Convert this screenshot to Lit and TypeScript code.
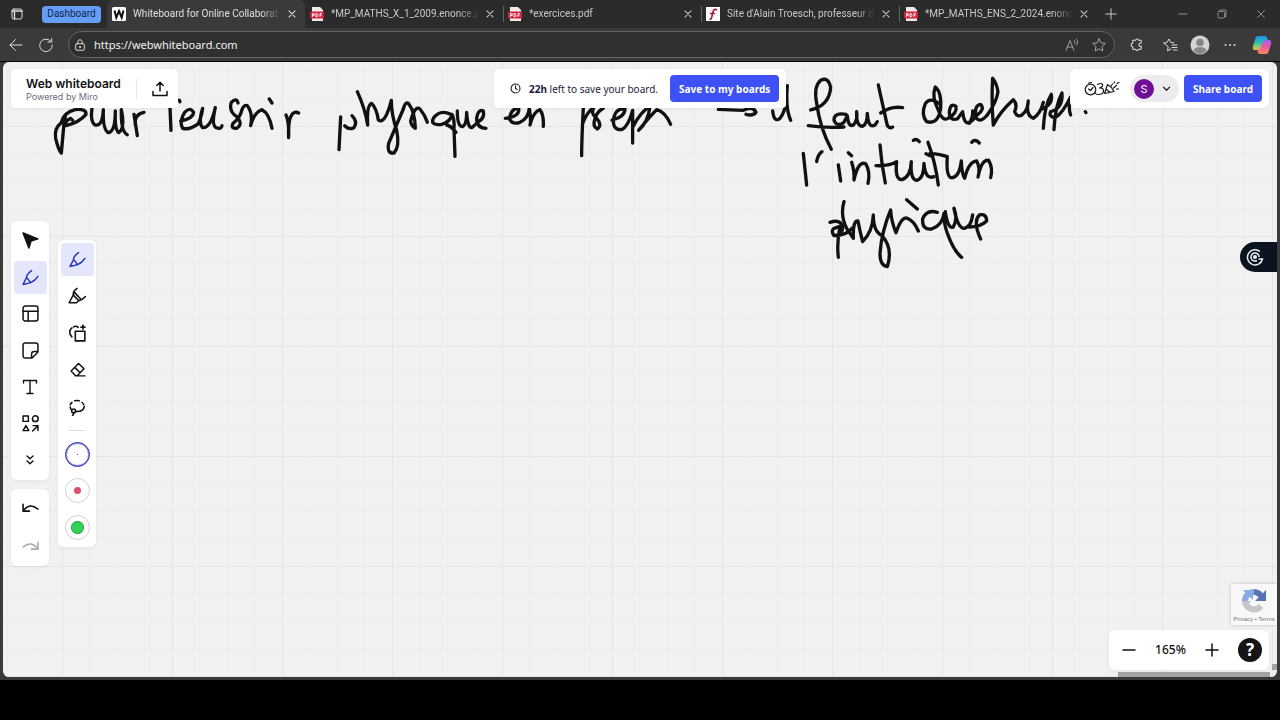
import { LitElement, html, svg, css } from "lit";
import { customElement, property, state } from "lit/decorators.js";
import { classMap } from "lit/directives/class-map.js";

const icons: Record<string, unknown> = {
  workspace: svg`<rect x="3" y="3" width="10" height="10" rx="2"/><path d="M3 5h10M5.500 6v7" stroke-width="1.4"/>`,
  back: svg`<path d="M14 8H2M7.500 2.500L2 8l5.500 5.500"/>`,
  reload: svg`<path d="M13 4.500A6.300 6.300 0 1 0 14.300 8M13.700 1.500v3.500h-3.700"/>`,
  lock: svg`<rect x="3" y="6.500" width="10" height="7.500" rx="1.500"/><path d="M5.500 6.500V4.500a2.500 2.500 0 0 1 5 0v2"/><circle cx="8" cy="10.300" r=".7" fill="currentColor"/>`,
  close: svg`<path d="M4.500 4.500l7 7M11.500 4.500l-7 7"/>`,
  plus: svg`<path d="M8 2v12M2 8h12"/>`,
  minus: svg`<path d="M2 8h12"/>`,
  minimize: svg`<path d="M4 8h8"/>`,
  restore: svg`<rect x="4" y="5.500" width="6.500" height="6.500" rx="1"/><path d="M6 5.500V4h6v6.500h-1.500"/>`,
  star: svg`<path d="M8 1.800l1.900 4 4.300.6-3.100 3.100.7 4.400L8 11.800l-3.800 2.100.7-4.400L1.800 6.400l4.300-.6z"/>`,
  aloud: svg`<path d="M2 13.500L6 3.500l4 10M3.300 10h5.400M10.500 3.500q1.500 1.500 0 3.500M12.500 2q2.800 2.700.3 6"/>`,
  puzzle: svg`<path d="M5 3.500h2a1.700 1.700 0 0 1 3.300 0H13v3a1.800 1.800 0 1 0 0 3.400V13h-2.800a1.700 1.700 0 0 1-3.300 0H4v-2.800a1.800 1.800 0 1 1 0-3.600V3.500z"/>`,
  favorites: svg`<path d="M9 12l-3.500 1.800.7-4L3 7l-1.500-1L5 5.500 7 2l1.800 3.500 3 .3M10 8h5M10 10.500h5M11.500 13H15"/>`,
  more: svg`<g fill="currentColor" stroke="none"><circle cx="3.500" cy="8" r="1"/><circle cx="8" cy="8" r="1"/><circle cx="12.500" cy="8" r="1"/></g>`,
  export: svg`<path d="M8 10V1.500M4.800 4.500L8 1.300l3.200 3.200M1 10.500v4h14v-4"/>`,
  clock: svg`<circle cx="8" cy="8" r="6.500"/><path d="M8 4v4l2.500 1.500"/>`,
  chevron: svg`<path d="M3.500 6L8 10.500 12.500 6"/>`,
  cursor: svg`<path d="M1 1l14 5.500-6.500 2L6.500 15z" fill="currentColor"/>`,
  pen: svg`<path d="M9 1.500Q4 5 4.300 8L1 14.500 8.200 12.800Q12.500 11 15 7M4.300 8L8.200 12.800"/>`,
  highlighter: svg`<path d="M8 1.200Q4 4 5 6.500L1 14h6.500l2-1.800Q13 11.500 15.500 8.500M4.500 7l5.200 5.200M6 5l5.500 6"/>`,
  smart: svg`<rect x="6.500" y="6.500" width="8.500" height="8.500"/><path d="M3.500 11.500Q-.5 7 3.500 3.500M5 2.500q2.500-1.300 4 .5M11.500 2.800h3.600M13.300 1v3.600"/>`,
  eraser: svg`<path d="M2 9.500L9 2.300l5.200 5-6.500 6.500H6.200L2 9.500zM5.500 6l5 5M6 14h9"/>`,
  lasso: svg`<path d="M2 6q.5-1.300 1.500-2M6 2.500q2-.7 4 0M12.500 4q1 .8 1.500 2M14.500 7.500Q14 12.500 6.500 12M2 8q0 1.500 1.200 2.500"/><circle cx="5" cy="11.500" r="1.700"/><path d="M5 13.500q0 1.500-1 2"/>`,
  table: svg`<rect x="1" y="1" width="14" height="14" rx="2"/><path d="M1 5.800h14M5.800 5.800V15"/>`,
  sticky: svg`<path d="M3 1h10q2 0 2 2v6.500L9.500 15H3q-2 0-2-2V3q0-2 2-2zM15 9h-3.500Q9 9 9 11.500V15"/>`,
  text: svg`<path d="M1.500 4V1.500h13V4M8 1.500v13M5 14.500h6"/>`,
  shapes: svg`<rect x="1" y="1" width="5" height="5"/><circle cx="12.500" cy="3.500" r="2.700"/><path d="M3.700 10L1 14.700h5.400zM10 15l5-5M10.500 10H15v4.500"/>`,
  expand: svg`<path d="M5 4L8 6.800 11 4M5 9L8 11.800 11 9"/>`,
  undo: svg`<path d="M1 4v6.500h6M1.500 10Q7 2 15 8.500"/>`,
  redo: svg`<path d="M15 4v6.500H9M14.500 10Q9 2 1 8.500"/>`,
};

const icon = (name: string, size = 16, weight = 1.3) => html`<svg
  width=${size} height=${size} viewBox="0 0 16 16" fill="none" stroke="currentColor"
  stroke-width=${weight} stroke-linecap="round" stroke-linejoin="round" aria-hidden="true">${icons[name]}</svg>`;

const favicons: Record<string, unknown> = {
  board: svg`<rect x="1" y="1" width="14" height="14" rx="1.500" fill="#fff"/><path d="M3.500 4.500l1.800 7L8 5l2.700 6.500 1.800-7" fill="none" stroke="#111" stroke-width="2"/>`,
  pdf: svg`<path d="M3 1h8l3 3v11H3z" fill="#f4e9ea"/><rect x="1" y="5.500" width="14" height="7" rx="1" fill="#d5213b"/><path d="M3.500 11V7.500h1.700v2H3.500M7 11V7.500q2 0 2 1.700T7 11M11 11V7.500h2M11 9.300h1.600" fill="none" stroke="#fff" stroke-width=".9"/>`,
  site: svg`<rect x="1" y="1" width="14" height="14" fill="#fff"/><path d="M12 4q-3-2-4 2l-1.500 6Q6 13.500 4.500 13M5 7.500h5" fill="none" stroke="#a8152c" stroke-width="1.600"/>`,
};

const base = css`
  * { box-sizing: border-box; }
  button { font: inherit; color: inherit; border: 0; padding: 0; background: none; display: flex; align-items: center; justify-content: center; }
  svg { display: block; flex: none; }
`;

@customElement("browser-tab")
class BrowserTab extends LitElement {
  @property() label = "";
  @property() kind = "pdf";
  @property({ type: Boolean, reflect: true }) active = false;
  static styles = [base, css`
    :host { flex: 0 1 198px; min-width: 0; display: flex; align-items: center; padding-right: 6px; color: #c8c8c8; }
    :host([active]) { background: #3a3a3a; border-radius: 6px 6px 0 0; color: #e0e0e0; }
    .tab { flex: 1; min-width: 0; justify-content: flex-start; gap: 6px; height: 16px; border-left: 1px solid #626262; padding-left: 3px; }
    :host([active]) .tab { border-color: transparent; }
    :host([first]) .tab { border-color: transparent; }
    .label { flex: 1; min-width: 0; overflow: hidden; white-space: nowrap; text-align: left; mask-image: linear-gradient(to right, #000 calc(100% - 20px), transparent); }
    .close { width: 14px; height: 16px; margin-left: 4px; }
  `];
  render() {
    return html`
      <button class="tab"><svg width="16" height="16" viewBox="0 0 16 16" aria-hidden="true">${favicons[this.kind]}</svg><span class="label">${this.label}</span></button>
      <button class="close" aria-label="Close tab">${icon("close", 14, 1.2)}</button>`;
  }
}

@customElement("browser-chrome")
class BrowserChrome extends LitElement {
  static styles = [base, css`
    :host { display: block; font: 10px/16px Roboto, "Open Sans", sans-serif; color: #dcdcdc; }
    .tabs { display: flex; height: 28px; background: #2b2b2b; padding-left: 9px; }
    .workspace { width: 16px; }
    .group { align-self: center; width: 59px; height: 17px; margin: 0 6px 0 17px; border-radius: 4px; background: #669df6; color: #12264d; }
    .new { width: 28px; }
    .window { display: flex; margin-left: auto; color: #8b8b8b; }
    .window button { width: 39px; }
    .bar { display: flex; align-items: center; height: 34px; padding: 0 10px 0 8px; background: #3a3a3a; border-bottom: 1px solid #050505; }
    .nav { width: 16px; margin-right: 14px; }
    .address { flex: 1; min-width: 0; display: flex; align-items: center; gap: 7px; height: 27px; padding: 0 6px 0 4px; border: 1px solid #646464; border-radius: 14px; background: #303030; }
    .address input { flex: 1; min-width: 0; border: 0; padding: 0; background: none; color: #f0f0f0; font: 11px/16px "Noto Sans", "Open Sans", sans-serif; }
    .address button { width: 18px; margin-left: 2px; color: #a8a8a8; }
    .tools { display: flex; align-items: center; gap: 14px; margin-left: 13px; }
    .tools button { width: 16px; }
    .tools .puzzle { margin-right: 4px; }
    .tools .copilot { margin-left: 2px; }
  `];
  render() {
    return html`
      <div class="tabs">
        <button class="workspace" aria-label="Workspaces">${icon("workspace", 16, 1)}</button>
        <button class="group">Dashboard</button>
        <browser-tab active kind="board" label="Whiteboard for Online Collaborat"></browser-tab>
        <browser-tab first label="*MP_MATHS_X_1_2009.enonce.pdf"></browser-tab>
        <browser-tab label="*exercices.pdf"></browser-tab>
        <browser-tab kind="site" label="Site d'Alain Troesch, professeur de"></browser-tab>
        <browser-tab label="*MP_MATHS_ENS_2_2024.enonce"></browser-tab>
        <button class="new" aria-label="New tab">${icon("plus", 14, 1)}</button>
        <div class="window">
          <button aria-label="Minimize">${icon("minimize", 16, 1)}</button>
          <button aria-label="Restore">${icon("restore", 16, 1)}</button>
          <button aria-label="Close">${icon("close", 16, 1)}</button>
        </div>
      </div>
      <div class="bar">
        <button class="nav" aria-label="Back">${icon("back", 16, 1)}</button>
        <button class="nav" aria-label="Reload">${icon("reload", 16, 1)}</button>
        <div class="address">
          ${icon("lock", 14, 1.1)}
          <input aria-label="Address" .value=${"https://webwhiteboard.com"}>
          <button aria-label="Read aloud">${icon("aloud", 16, 0.9)}</button>
          <button aria-label="Favorite">${icon("star", 16, 1)}</button>
        </div>
        <div class="tools">
          <button class="puzzle" aria-label="Extensions">${icon("puzzle", 15, 1.1)}</button>
          <button aria-label="Favorites list">${icon("favorites", 16, 1)}</button>
          <button aria-label="Profile"><svg width="20" height="20" viewBox="0 0 20 20"><circle cx="10" cy="10" r="9.500" fill="#d4d4d4"/><circle cx="10" cy="7.500" r="3.800" fill="#858585"/><path d="M3.500 16q1-4 6.500-4t6.500 4q-6.500 6-13 0z" fill="#858585"/></svg></button>
          <button aria-label="More">${icon("more")}</button>
          <button class="copilot" aria-label="Copilot"><svg width="20" height="20" viewBox="0 0 20 20">
            <defs><linearGradient id="a" x2="0" y2="1"><stop stop-color="#1a8df0"/><stop offset=".5" stop-color="#33c3a0"/><stop offset="1" stop-color="#f2c53d"/></linearGradient>
            <linearGradient id="b" x2="0" y2="1"><stop stop-color="#a15cf0"/><stop offset=".5" stop-color="#ee5aa0"/><stop offset="1" stop-color="#fb8a55"/></linearGradient></defs>
            <path d="M6 1h7q2 0 2.500 3l.5 2h-4L9 13q-.7 2-2.500 2H3q-3 0-2-4l2.500-8Q4 1 6 1z" fill="url(#a)"/>
            <path d="M14 19H8q-2 0-2.500-3L5 14h3l3-7q.7-2 2.500-2H17q3 0 2 4l-2.500 8Q16 19 14 19z" fill="url(#b)"/></svg></button>
        </div>
      </div>`;
  }
}

/* Handwritten strokes, one list per phrase, in thirds of a board pixel. */
const ink = [
  { x: 40, y: 75, d: [
    "M62 145Q42 160 47 190Q55 225 64 234Q68 190 72 145L76 125M64 142Q72 112 105 104Q140 100 138 118Q118 142 78 152Q72 140 92 130L98 136",
    "M156 100Q150 140 165 150Q188 155 190 104Q188 165 205 173Q226 170 226 108Q224 165 236 173Q256 160 244 104Q242 170 262 179",
    "M282 118L292 182M286 150Q282 118 312 112",
    "M390 98L393 166M418 76L420 80",
    "M422 138Q460 130 461 112Q450 94 434 112Q416 140 428 160Q450 166 475 146Q486 120 488 100Q474 145 488 158Q512 160 526 98Q514 150 528 158Q545 164 546 152",
    "M594 84Q590 66 574 82Q565 110 592 126Q610 148 590 160Q570 160 580 144Q600 130 606 104Q612 88 622 92Q640 115 632 152Q642 112 666 104Q688 115 696 160M688 72L696 84",
    "M738 120Q748 140 746 188Q744 145 752 125Q762 106 776 114",
  ] },
  { x: 320, y: 75, d: [
    "M62 126L57 224M96 122Q114 140 102 158Q86 166 74 152",
    "M112 50Q135 100 143 150Q140 90 155 85Q170 100 175 135Q195 150 214 76Q214 120 230 165Q240 215 222 234Q200 237 206 205Q225 160 250 102",
    "M250 102Q256 78 266 86Q285 110 286 160Q272 150 272 138Q285 90 300 102Q315 120 322 142",
    "M392 118Q360 102 340 130Q330 152 365 148Q392 140 396 118Q404 130 402 160L405 244M380 150Q392 152 408 172",
    "M412 108Q412 155 428 155Q440 150 440 112Q443 160 456 158L475 140Q495 130 490 108Q475 100 470 130Q470 160 498 160",
    "M556 130Q600 125 596 100Q575 98 568 130Q575 150 600 142Q625 130 628 100Q634 140 630 150Q640 110 660 104Q672 120 670 154",
    "M790 98Q785 200 785 242M787 148Q800 112 822 96Q810 115 830 130Q848 150 832 162Q816 155 826 128Q832 110 850 100",
    "M876 135Q915 125 915 102Q890 98 882 125Q874 165 905 164Q925 155 938 106L938 204M940 154Q960 112 990 94Q985 140 956 166Q985 130 1010 104Q1035 110 1052 148",
  ] },
  { x: 700, y: 65, d: [
    "M55 133L130 136Q160 122 168 142Q158 154 138 148M218 138Q222 174 240 160Q254 142 256 118M262 62Q256 130 272 166",
    "M332 135Q388 122 392 68Q385 34 362 46Q340 65 350 115Q360 190 394 253M325 182Q380 190 432 186",
    "M438 148Q402 142 402 165Q410 188 432 172L442 152Q445 188 460 180Q474 165 470 140Q468 184 488 184Q502 178 502 145Q505 192 525 180L532 170",
    "M535 60L562 182Q570 192 578 186M542 144Q575 122 608 128",
    "M718 116Q690 95 676 116Q662 150 680 170Q715 180 722 130Q725 80 706 66Q694 95 716 138Q728 170 744 160Q772 145 768 124Q752 112 748 140Q748 168 772 162L788 140Q792 178 808 174Q820 155 818 138",
    "M808 174Q820 165 832 150Q856 132 842 118Q822 120 828 158Q840 176 862 150",
    "M862 150Q890 110 894 80Q890 55 878 40Q874 110 880 180Q900 140 940 104Q954 118 944 140Q952 160 968 148Q984 134 985 108Q976 150 1000 160Q1022 145 1030 112",
    "M1030 190Q1034 120 1054 88Q1060 118 1026 132M1062 194Q1066 120 1086 84Q1090 130 1052 140Q1045 155 1066 158Q1088 145 1112 96Q1104 130 1112 150M1156 140L1158 143",
    "M310 265L320 360M350 290Q354 268 366 260M415 300L422 348M445 263L455 272",
    "M455 292Q464 320 462 345Q475 286 497 296Q512 320 504 355M540 240Q545 300 556 354M528 302Q568 304 590 290Q584 345 606 344Q632 335 634 290Q630 346 652 346Q672 338 672 295Q676 346 702 335",
    "M640 226Q650 220 658 230M684 232Q706 290 715 360M678 266L690 272M690 265Q722 268 742 275Q738 330 752 338Q778 340 784 288Q786 330 794 340Q806 290 830 288Q842 310 834 336Q845 282 866 286Q880 310 872 338M815 232Q825 220 838 234",
    "M390 472Q420 462 428 484Q430 510 402 512Q392 498 402 490L420 484Q410 530 415 577M402 512Q440 512 456 490",
    "M432 410Q420 450 440 490L460 520Q458 466 474 468Q480 500 488 530Q518 500 520 450Q520 500 546 512Q580 550 562 605Q540 602 540 565Q545 500 572 435Q574 470 588 503Q606 452 622 460Q642 468 655 498M620 404L652 432",
    "M712 442Q680 432 668 462Q666 496 695 492Q728 480 732 445Q730 470 742 505Q762 560 785 577M736 440Q744 494 760 486Q774 460 762 430Q774 492 794 490Q814 484 818 450M806 486Q842 486 860 468Q860 445 838 450Q818 470 842 522",
  ] },
];

@customElement("board-canvas")
class BoardCanvas extends LitElement {
  static styles = css`
    :host { display: block; background: #f1f1f1; }
    svg { display: block; width: 100%; height: 100%; }
    .ink { fill: none; stroke: #111; stroke-width: 10; stroke-linecap: round; stroke-linejoin: round; }
  `;
  render() {
    return html`<svg role="img" aria-label="Handwritten notes">
      <defs><pattern id="grid" x="59" y="64" width="110" height="110" patternUnits="userSpaceOnUse">
        <path d="M27.500 0v110M55.500 0v110M82.500 0v110M0 27.500h110M0 55.500h110M0 82.500h110" stroke="#eeeeee"/>
        <path d="M.5 0v110M0 .5h110" stroke="#e5e5e5"/>
      </pattern></defs>
      <rect width="100%" height="100%" fill="url(#grid)"/>
      ${ink.map((p) => svg`<g class="ink" transform="translate(${p.x - 3} ${p.y - 62}) scale(.3333)">${p.d.map((d) => svg`<path d=${d}/>`)}</g>`)}
    </svg>`;
  }
}

@customElement("app-root")
class AppRoot extends LitElement {
  @state() tool = "pen";
  static styles = [base, css`
    :host { display: flex; flex-direction: column; height: 100vh; background: #000; font: 10px/16px "Noto Sans", "Open Sans", sans-serif; color: #111; }
    .window { flex: 1; min-height: 0; display: flex; flex-direction: column; margin-bottom: 40px; background: #3a3a3a; }
    .board { flex: 1; min-height: 0; margin: 0 3px 3px; position: relative; overflow: hidden; border-radius: 6px; }
    board-canvas { height: 100%; }
    .panel { position: absolute; display: flex; align-items: center; background: #fff; border-radius: 6px; box-shadow: 0 1px 4px rgba(0, 0, 0, .06); }
    .title { top: 7px; left: 8px; height: 39px; border-radius: 4px; padding: 0 10px 0 15px; }
    .name { font: 600 12px/15px Inter, sans-serif; }
    .by { font: 9px/11px Inter, sans-serif; color: #6d6d80; }
    .divider { width: 1px; height: 20px; margin: 0 15px; background: #e6e6ea; }
    .save { top: 7px; left: 491px; height: 39px; padding: 0 7px 0 16px; border-radius: 4px; white-space: nowrap; color: #1c1c3a; }
    .save span { margin: 0 12px 0 8px; }
    .primary { height: 27px; padding: 0 9px; border-radius: 4px; background: #3d51f5; color: #fff; font-weight: 700; white-space: nowrap; }
    .share { top: 7px; right: 8px; height: 39px; padding: 0 7px 0 14px; }
    .user { height: 27px; width: 49px; margin: 0 5px 0 10px; padding: 0 7px 0 4px; justify-content: space-between; border-radius: 14px; background: #ececf0; }
    .avatar { width: 20px; height: 20px; border-radius: 50%; background: #6f0f96; color: #fff; font: 11px/20px Inter, sans-serif; }
    .tools { flex-direction: column; justify-content: space-between; padding: 3px 2px; width: 38px; }
    .tools button { width: 33px; height: 33px; border-radius: 4px; }
    .tools .on { background: #e4e7fb; color: #2a35b8; }
    .main { left: 8px; top: 159px; height: 259px; }
    .history { left: 8px; top: 427px; height: 77px; }
    .tools .off { color: #aaa; }
    .pens { left: 55px; top: 178px; height: 307px; }
    .rule { width: 18px; height: 1px; margin: 3px 0; background: #e2e2e6; }
    .swatch { width: 25px; height: 25px; border-radius: 50%; border: 1px solid #d9ccd2; display: flex; align-items: center; justify-content: center; }
    .swatch.chosen { border-color: #2226b4; box-shadow: inset 0 0 0 1px #8f92e0; }
    .dot { border-radius: 50%; }
    .tiny { width: 1px; height: 1px; background: #222; }
    .small { width: 7px; height: 7px; background: #d94f6a; }
    .large { width: 13px; height: 13px; background: #34d058; box-shadow: inset 0 0 0 1px #2fae50; }
    .side { position: absolute; right: 0; top: 180px; width: 37px; height: 30px; padding-right: 7px; border-radius: 15px 0 0 15px; background: #0b1220; color: #e8eef6; }
    .captcha { position: absolute; right: 0; top: 522px; width: 46px; height: 41px; padding-top: 3px; display: flex; flex-direction: column; align-items: center; background: #f8f8f8; box-shadow: 0 0 3px #bbb; font: 6px/8px "Liberation Sans", sans-serif; color: #777; }
    .captcha a { color: inherit; text-decoration: none; }
    .zoom { right: 8px; bottom: 7px; height: 40px; padding: 0 7px 0 12px; font: 500 12px/16px "Noto Sans", sans-serif; }
    .zoom span { width: 51px; margin: 0 8px; text-align: center; }
    .help { width: 24px; height: 24px; margin-left: 18px; border-radius: 50%; background: #151515; color: #fff; font: 700 17px/24px "Noto Sans", sans-serif; }
    .scroll { position: absolute; background: #a3a3a3; }
    .across { right: 7px; bottom: 0; width: 152px; height: 5px; }
    .down { right: 0; bottom: 7px; width: 5px; height: 6px; }
  `];

  private toolButton(name: string, label: string, size = 17) {
    return html`<button class=${classMap({ on: this.tool === name })} aria-label=${label} @click=${() => (this.tool = name)}>${icon(name, size, 1.4)}</button>`;
  }

  render() {
    return html`
      <div class="window">
        <browser-chrome></browser-chrome>
        <main class="board">
          <board-canvas></board-canvas>
          <header class="panel title">
            <div><div class="name">Web whiteboard</div><div class="by">Powered by Miro</div></div>
            <div class="divider"></div>
            <button aria-label="Export">${icon("export", 16, 1.5)}</button>
          </header>
          <div class="panel save">
            ${icon("clock", 11, 1.6)}<span><b>22h</b> left to save your board.</span>
            <button class="primary">Save to my boards</button>
          </div>
          <div class="panel share">
            <button aria-label="Activities"><svg width="36" height="16" viewBox="0 0 36 16" fill="none" stroke="#151515" stroke-width="1.200" stroke-linecap="round" stroke-linejoin="round">
              <circle cx="6.500" cy="8.500" r="5.300"/><path d="M4.500 8l2 1.500 2.500-3M4.500 2l3-.5M13.500 3.500q4-2 5 0t-3 3.500q4-.5 4 3t-5.500 3.500q-2 0-3-1.500M20.500 12.500l3-9q4.500 2.500 6.500 7zM22 8l4 3.500M27 5l1.500-2M29.500 7l3-2.500M30 2l.5-1M33 2.500l2-1M32.500 8h2"/></svg></button>
            <button class="user" aria-label="Account"><span class="avatar">S</span>${icon("chevron", 11, 1.7)}</button>
            <button class="primary">Share board</button>
          </div>
          <nav class="panel tools main">
            ${this.toolButton("cursor", "Select")}
            ${this.toolButton("pen", "Pen")}
            ${this.toolButton("table", "Templates")}
            ${this.toolButton("sticky", "Sticky note")}
            ${this.toolButton("text", "Text", 16)}
            ${this.toolButton("shapes", "Shapes")}
            ${this.toolButton("expand", "More tools", 16)}
          </nav>
          <div class="panel tools history">
            <button aria-label="Undo">${icon("undo", 17, 1.5)}</button>
            <button class="off" aria-label="Redo">${icon("redo", 17, 1.5)}</button>
          </div>
          <div class="panel tools pens">
            <button class="on" aria-label="Pen">${icon("pen", 17, 1.4)}</button>
            ${this.toolButton("highlighter", "Highlighter", 18)}
            ${this.toolButton("smart", "Smart drawing", 18)}
            ${this.toolButton("eraser", "Eraser")}
            ${this.toolButton("lasso", "Lasso", 18)}
            <div class="rule"></div>
            <button aria-label="Black pen"><span class="swatch chosen"><span class="dot tiny"></span></span></button>
            <button aria-label="Red pen"><span class="swatch"><span class="dot small"></span></span></button>
            <button aria-label="Green pen"><span class="swatch"><span class="dot large"></span></span></button>
          </div>
          <button class="side" aria-label="Assistant"><svg width="18" height="18" viewBox="0 0 18 18" fill="none" stroke="currentColor" stroke-width="1.500"><path d="M14 3.500A7.600 7.600 0 1 0 16.500 11h-4M13 9a4 4 0 1 0-2 3.500"/><circle cx="9" cy="9" r="1.300" fill="currentColor"/></svg></button>
          <div class="captcha">
            <svg width="28" height="28" viewBox="0 0 28 28" fill="none" stroke-width="6"><path d="M14 5a9 9 0 0 1 8 6" stroke="#5673b8"/><path d="M5 14a9 9 0 0 1 9-9" stroke="#87aae6"/><path d="M5 14a9 9 0 0 0 16 5" stroke="#c4c6ca"/><path d="M26 3v11H15z" fill="#5673b8"/><path d="M3 3h10v10z" fill="#87aae6"/><path d="M1 14h10l-3 5z" fill="#c4c6ca"/></svg>
            <div><a href="#privacy">Privacy</a> • <a href="#terms">Terms</a></div>
          </div>
          <div class="panel zoom">
            <button aria-label="Zoom out">${icon("minus", 16, 1.5)}</button>
            <span>165%</span>
            <button aria-label="Zoom in">${icon("plus", 16, 1.5)}</button>
            <button class="help" aria-label="Help">?</button>
          </div>
          <div class="scroll across"></div>
          <div class="scroll down"></div>
        </main>
      </div>`;
  }
}
